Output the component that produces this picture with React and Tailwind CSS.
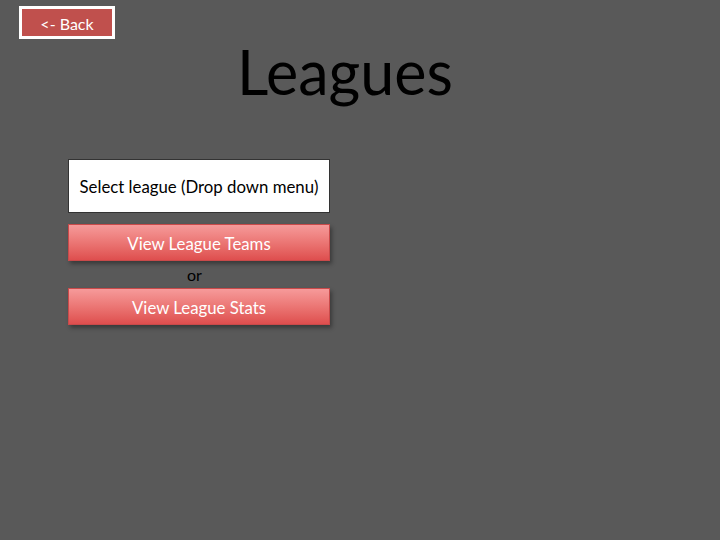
import React from "react";

const font = { fontFamily: "Lato, 'Open Sans', sans-serif" };

export default function App() {
  return (
    <div
      className="w-[720px] h-[540px] bg-[#595959] overflow-hidden relative"
      style={font}
    >
      <div className="pl-[19px] pt-[6px]">
        <button className="w-[96px] h-[33px] border-[3px] border-white bg-[#c0504d] text-white text-[16px] leading-none flex items-center justify-center pt-[3px]">
          &lt;- Back
        </button>
      </div>

      <h1 className="text-center text-black text-[61px] leading-none ml-[-30px] mt-[2px]">
        Leagues
      </h1>

      <div className="ml-[68px] mt-[57px] w-[262px] flex flex-col">
        <div className="h-[54px] bg-white border border-[#333] flex items-center justify-center text-black text-[16.8px] pt-[2px]">
          Select league (Drop down menu)
        </div>
        <button className="mt-[11px] h-[37px] border border-[#c94a4a] bg-gradient-to-b from-[#f69a9a] to-[#de4e4e] text-white text-[16.8px] shadow-[2px_3px_4px_rgba(0,0,0,0.35)] flex items-center justify-center pt-[2px]">
          View League Teams
        </button>
        <div className="h-[27px] flex items-center justify-center text-black text-[16px] ml-[-9px]">
          or
        </div>
        <button className="h-[37px] border border-[#c94a4a] bg-gradient-to-b from-[#f69a9a] to-[#de4e4e] text-white text-[16.8px] shadow-[2px_3px_4px_rgba(0,0,0,0.35)] flex items-center justify-center pt-[2px]">
          View League Stats
        </button>
      </div>
    </div>
  );
}
